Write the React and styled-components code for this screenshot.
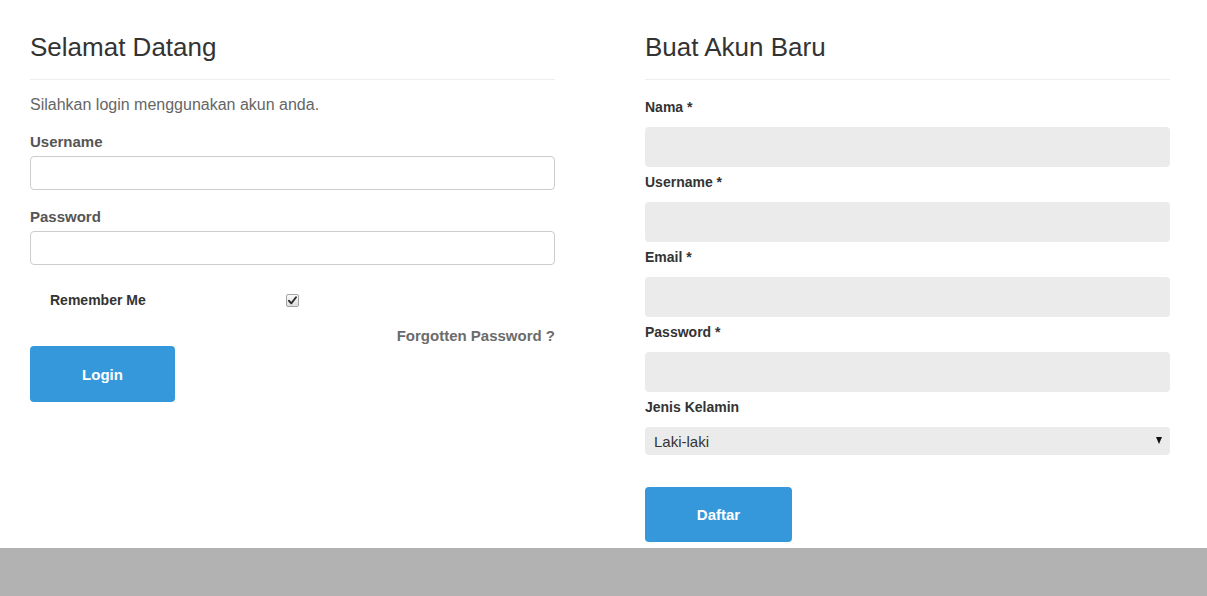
import React from "react";
import styled, { createGlobalStyle } from "styled-components";

const GlobalStyle = createGlobalStyle`
  html, body { margin: 0; padding: 0; background: #fff; }
  body { font-family: "Liberation Sans", Arial, Helvetica, sans-serif; color: #333; }
  * { box-sizing: border-box; }
`;

const Main = styled.main`
  display: grid;
  grid-template-columns: 525px 525px;
  column-gap: 90px;
  padding: 0 30px;
  align-items: start;
`;

const Column = styled.section`
  display: flex;
  flex-direction: column;
`;

const Heading = styled.h2`
  margin: 32px 0 0;
  font-size: 26px;
  line-height: 30px;
  font-weight: 400;
  color: #333;
`;

const Divider = styled.hr`
  margin: 17px 0 0;
  border: 0;
  border-top: 1px solid #eee;
  height: 0;
`;

const Intro = styled.p`
  margin: 14px 0 0;
  font-size: 16px;
  line-height: 22px;
  color: #666;
`;

const LoginLabel = styled.label`
  display: block;
  margin-top: ${(p) => p.$top}px;
  font-size: 15px;
  line-height: 21px;
  font-weight: 700;
  color: #555;
`;

const LoginInput = styled.input`
  display: block;
  width: 100%;
  height: 34px;
  margin-top: 4px;
  padding: 6px 12px;
  border: 1px solid #ccc;
  border-radius: 4px;
  background: #fff;
  font: inherit;
  font-size: 14px;
  outline: none;
`;

const RememberRow = styled.div`
  display: flex;
  align-items: center;
  margin-top: 25px;
  padding-left: 20px;
  height: 20px;
`;

const RememberText = styled.span`
  width: 236px;
  font-size: 14px;
  font-weight: 700;
  color: #333;
`;

const CheckBox = styled.span`
  display: inline-flex;
  align-items: center;
  justify-content: center;
  width: 13px;
  height: 13px;
  border: 1px solid #a3a3a3;
  border-radius: 2px;
  background: linear-gradient(#fafafa, #dedede);
`;

const ForgotLink = styled.a`
  display: block;
  align-self: flex-end;
  margin-top: 16px;
  font-size: 15px;
  line-height: 20px;
  font-weight: 700;
  color: #6b6b6b;
  text-decoration: none;
`;

const Button = styled.button`
  width: ${(p) => p.$w}px;
  height: ${(p) => p.$h}px;
  margin-top: ${(p) => p.$top}px;
  border: 0;
  border-radius: 4px;
  background: #3598db;
  color: #fff;
  font-family: inherit;
  font-size: 15px;
  font-weight: 700;
  cursor: pointer;
`;

const RegLabel = styled.label`
  display: block;
  margin-top: ${(p) => p.$top}px;
  font-size: 14px;
  line-height: 20px;
  font-weight: 700;
  color: #333;
`;

const RegInput = styled.input`
  display: block;
  width: 100%;
  height: 40px;
  margin-top: 10px;
  padding: 0 10px;
  border: 0;
  border-radius: 4px;
  background: #ebebeb;
  font: inherit;
  font-size: 15px;
  outline: none;
`;

const SelectWrap = styled.div`
  position: relative;
  margin-top: 10px;
`;

const Select = styled.select`
  display: block;
  width: 100%;
  height: 28px;
  padding: 0 0 0 9px;
  border: 0;
  border-radius: 4px;
  background: #ebebeb;
  appearance: none;
  -webkit-appearance: none;
  font-family: inherit;
  font-size: 15px;
  color: #333;
  outline: none;
`;

const Arrow = styled.span`
  position: absolute;
  right: 8px;
  top: 10px;
  width: 0;
  height: 0;
  border-left: 3.5px solid transparent;
  border-right: 3.5px solid transparent;
  border-top: 7px solid #111;
  pointer-events: none;
`;

const Footer = styled.footer`
  margin-top: 6px;
  height: 48px;
  background: #b2b2b2;
`;

const regFields = [
  { label: "Nama *", type: "text" },
  { label: "Username *", type: "text" },
  { label: "Email *", type: "email" },
  { label: "Password *", type: "password" },
];

export default function App() {
  return (
    <>
      <GlobalStyle />
      <Main>
        <Column>
          <Heading>Selamat Datang</Heading>
          <Divider />
          <Intro>Silahkan login menggunakan akun anda.</Intro>
          <LoginLabel $top={15}>Username</LoginLabel>
          <LoginInput type="text" />
          <LoginLabel $top={16}>Password</LoginLabel>
          <LoginInput type="password" />
          <RememberRow>
            <RememberText>Remember Me</RememberText>
            <CheckBox>
              <svg width="9" height="9" viewBox="0 0 9 9">
                <path d="M1 4.8 L3.4 7.3 L8 1.2" fill="none" stroke="#2b2b2b" strokeWidth="1.9" strokeLinecap="round" strokeLinejoin="round" />
              </svg>
            </CheckBox>
          </RememberRow>
          <ForgotLink href="#">Forgotten Password ?</ForgotLink>
          <Button $w={145} $h={56} $top={0}>Login</Button>
        </Column>
        <Column>
          <Heading>Buat Akun Baru</Heading>
          <Divider />
          {regFields.map((f, i) => (
            <React.Fragment key={f.label}>
              <RegLabel $top={i === 0 ? 17 : 5}>{f.label}</RegLabel>
              <RegInput type={f.type} />
            </React.Fragment>
          ))}
          <RegLabel $top={5}>Jenis Kelamin</RegLabel>
          <SelectWrap>
            <Select defaultValue="L">
              <option value="L">Laki-laki</option>
              <option value="P">Perempuan</option>
            </Select>
            <Arrow />
          </SelectWrap>
          <Button $w={147} $h={55} $top={32}>Daftar</Button>
        </Column>
      </Main>
      <Footer />
    </>
  );
}
